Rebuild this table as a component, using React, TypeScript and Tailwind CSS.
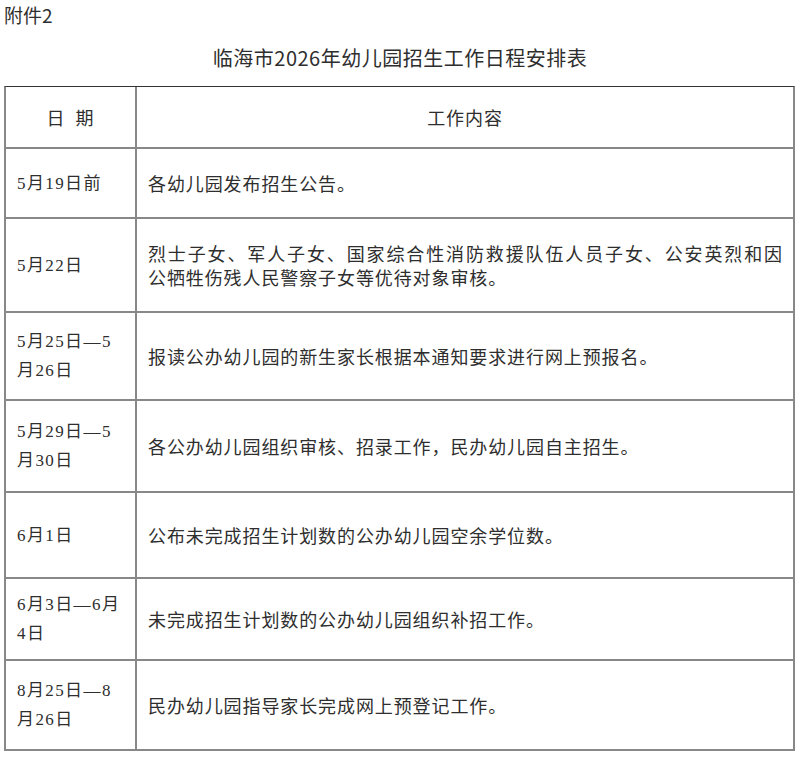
const cjk = "'Noto Sans CJK SC', 'Noto Sans', sans-serif"
const dateFont = "'Liberation Serif', 'Noto Sans CJK SC', serif"

const rows = [
  { h: "h-[70px]", date: ["5月19日前"], text: ["各幼儿园发布招生公告。"] },
  {
    h: "h-[94px]",
    date: ["5月22日"],
    text: ["烈士子女、军人子女、国家综合性消防救援队伍人员子女、公安英烈和因", "公牺牲伤残人民警察子女等优待对象审核。"],
  },
  { h: "h-[88px]", date: ["5月25日—5", "月26日"], text: ["报读公办幼儿园的新生家长根据本通知要求进行网上预报名。"] },
  { h: "h-[92px]", date: ["5月29日—5", "月30日"], text: ["各公办幼儿园组织审核、招录工作，民办幼儿园自主招生。"] },
  { h: "h-[86px]", date: ["6月1日"], text: ["公布未完成招生计划数的公办幼儿园空余学位数。"] },
  { h: "h-[82px]", date: ["6月3日—6月", "4日"], text: ["未完成招生计划数的公办幼儿园组织补招工作。"] },
  { h: "h-[90px]", date: ["8月25日—8", "月26日"], text: ["民办幼儿园指导家长完成网上预登记工作。"] },
]

export default function App() {
  return (
    <div className="w-[800px] h-[760px] bg-white text-[#2e2e2e] overflow-hidden">
      <div className="h-[30px] pl-1 flex items-center text-[19px]" style={{ fontFamily: cjk }}>
        附件2
      </div>
      <div className="h-[56px] flex items-center justify-center text-[20px] tracking-[0.5px]" style={{ fontFamily: cjk }}>
        临海市2026年幼儿园招生工作日程安排表
      </div>

      <div className="ml-1 w-[791px] border-t border-t-[#333] border-l-2 border-r-2 border-l-[#888] border-r-[#888]">
        <div className="flex h-[62px] border-b-2 border-b-[#888]">
          <div
            className="w-[131px] shrink-0 border-r-2 border-r-[#888] flex items-center justify-center text-[18px] tracking-[1px]"
            style={{ fontFamily: cjk }}
          >
            日&nbsp;&nbsp;期
          </div>
          <div className="flex-1 flex items-center justify-center text-[18px] tracking-[0.9px]" style={{ fontFamily: cjk }}>
            工作内容
          </div>
        </div>

        {rows.map((r, i) => (
          <div key={i} className={`flex ${r.h} border-b-2 border-b-[#888]`}>
            <div
              className="w-[131px] shrink-0 border-r-2 border-r-[#888] flex flex-col justify-center pl-[11px] text-[17px] leading-[29px] tracking-[1.4px]"
              style={{ fontFamily: dateFont }}
            >
              {r.date.map((d, j) => (
                <div key={j} className="whitespace-nowrap">
                  {d}
                </div>
              ))}
            </div>
            <div className="flex-1 flex flex-col justify-center pl-[11px] pr-[10px]" style={{ fontFamily: cjk }}>
              {r.text.map((t, j) => (
                <p
                  key={j}
                  className={`text-[18px] leading-[24px] tracking-[0.9px] whitespace-nowrap ${
                    r.text.length > 1 && j === 0 ? "text-justify [text-align-last:justify]" : ""
                  }`}
                >
                  {t}
                </p>
              ))}
            </div>
          </div>
        ))}
      </div>
    </div>
  )
}
